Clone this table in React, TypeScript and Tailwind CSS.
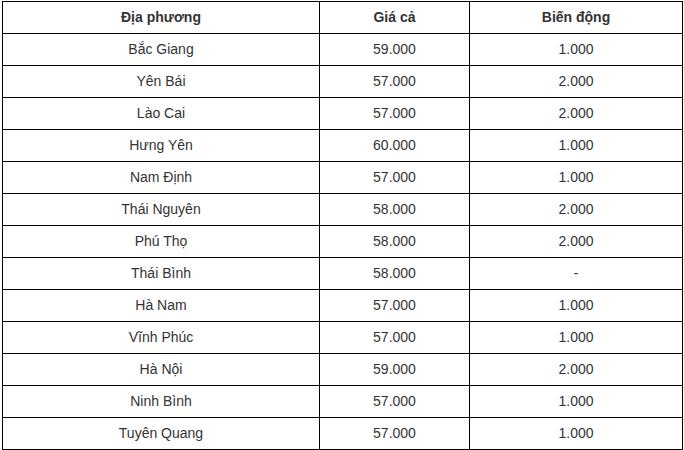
import React from "react";

const rows: [string, string, string][] = [
  ["Bắc Giang", "59.000", "1.000"],
  ["Yên Bái", "57.000", "2.000"],
  ["Lào Cai", "57.000", "2.000"],
  ["Hưng Yên", "60.000", "1.000"],
  ["Nam Định", "57.000", "1.000"],
  ["Thái Nguyên", "58.000", "2.000"],
  ["Phú Thọ", "58.000", "2.000"],
  ["Thái Bình", "58.000", "-"],
  ["Hà Nam", "57.000", "1.000"],
  ["Vĩnh Phúc", "57.000", "1.000"],
  ["Hà Nội", "59.000", "2.000"],
  ["Ninh Bình", "57.000", "1.000"],
  ["Tuyên Quang", "57.000", "1.000"],
];

export default function App() {
  return (
    <div className="w-[684px] h-[450px] bg-white pl-[2px] pt-[1px] overflow-hidden" style={{ fontFamily: '"Liberation Sans", Arial, sans-serif' }}>
      <table className="table-fixed border-collapse w-[680px] text-[14px] text-[#333333]">
        <colgroup>
          <col className="w-[317px]" />
          <col className="w-[150px]" />
          <col className="w-[213px]" />
        </colgroup>
        <thead>
          <tr className="h-[32px]">
            <th className="border border-black text-center font-bold p-0">Địa phương</th>
            <th className="border border-black text-center font-bold p-0">Giá cả</th>
            <th className="border border-black text-center font-bold p-0">Biến động</th>
          </tr>
        </thead>
        <tbody>
          {rows.map((r) => (
            <tr key={r[0]} className="h-[32px]">
              <td className="border border-black text-center p-0">{r[0]}</td>
              <td className="border border-black text-center p-0">{r[1]}</td>
              <td className="border border-black text-center p-0">{r[2]}</td>
            </tr>
          ))}
        </tbody>
      </table>
    </div>
  );
}
